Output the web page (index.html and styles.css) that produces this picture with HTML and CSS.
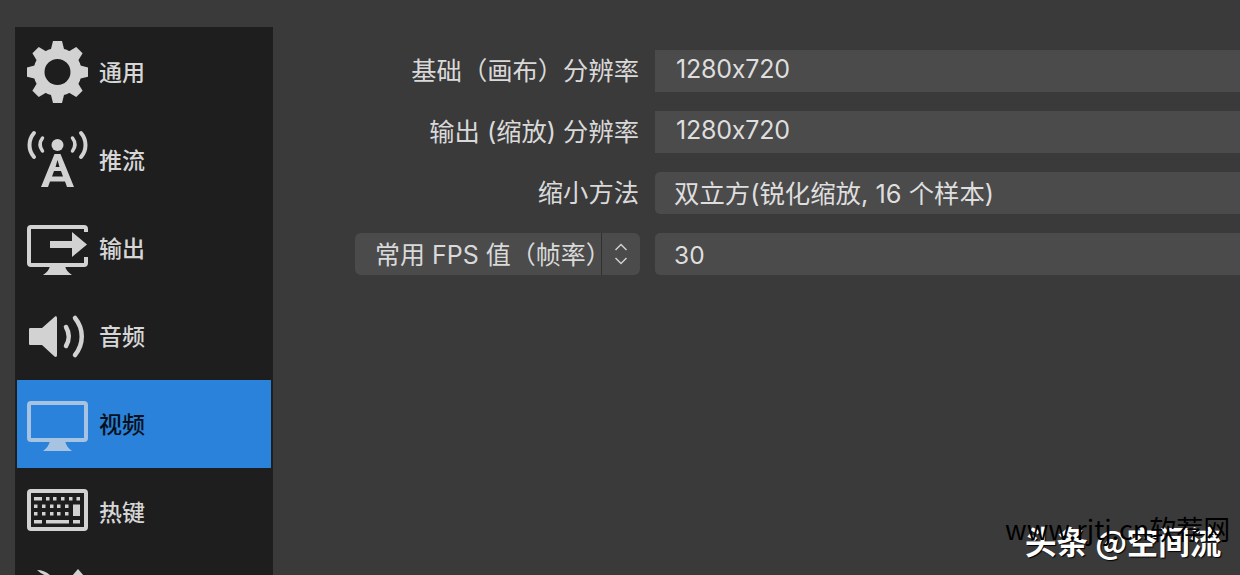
FILE: index.html
```html
<!DOCTYPE html>
<html lang="zh">
<head>
<meta charset="utf-8">
<title>视频设置</title>
<link rel="stylesheet" href="styles.css">
</head>
<body>
<div class="app">
  <nav class="sidebar">
    <div class="item">
      <svg class="icon" viewBox="0 0 61 62"><g class="fill"><circle class="gear-ring" cx="30.5" cy="31" r="18.5"/>
        <path d="M26-0 35-0 37.5 10 23.5 10Z"/>
        <path transform="rotate(45 30.5 31)" d="M26-0 35-0 37.5 10 23.5 10Z"/>
        <path transform="rotate(90 30.5 31)" d="M26-0 35-0 37.5 10 23.5 10Z"/>
        <path transform="rotate(135 30.5 31)" d="M26-0 35-0 37.5 10 23.5 10Z"/>
        <path transform="rotate(180 30.5 31)" d="M26-0 35-0 37.5 10 23.5 10Z"/>
        <path transform="rotate(225 30.5 31)" d="M26-0 35-0 37.5 10 23.5 10Z"/>
        <path transform="rotate(270 30.5 31)" d="M26-0 35-0 37.5 10 23.5 10Z"/>
        <path transform="rotate(315 30.5 31)" d="M26-0 35-0 37.5 10 23.5 10Z"/></g></svg>
      <span>通用</span>
    </div>
    <div class="item">
      <svg class="icon" viewBox="0 0 61 62"><g class="fill"><circle cx="30.5" cy="16" r="6"/><path fill-rule="evenodd" d="M27.5 25h6L47 58h-7l-2-5.500H23L21 58h-7ZM30.500 31 28.500 38h4ZM27 42l-2 5.500h11L34 42Z"/></g>
        <path class="line" d="M7 4C1 11 1 21 7 28M54 4c6 7 6 17 0 24"/><path class="line thin" d="M15.500 9c-3 4-3 9 0 13M45.500 9c3 4 3 9 0 13"/></svg>
      <span>推流</span>
    </div>
    <div class="item">
      <svg class="icon" viewBox="0 0 61 62"><path class="line-f" d="M59 15V12a2 2 0 0 0-2-2H4a2 2 0 0 0-2 2v34a2 2 0 0 0 2 2h53a2 2 0 0 0 2-2v-6"/><path class="fill" d="M23 49h15c1 4 3 6 7 9H16c4-3 6-5 7-9ZM23 24h22v-9l15 12.500L45 40v-9H23Z"/></svg>
      <span>输出</span>
    </div>
    <div class="item">
      <svg class="icon" viewBox="0 0 61 62"><path class="fill" d="M2 24.500c0-1 .5-1.500 1.500-1.500H15L28 11.500c1-.5 2 0 2 1.500v37c0 2-1 2.500-2.500 1.500L15 40H3.500C2.500 40 2 39.500 2 38.500Z"/><path class="line thick" d="M39 22c3.500 6 3.500 13 0 19"/><path class="line thick" d="M48 13c9 11 9 26 0 37"/></svg>
      <span>音频</span>
    </div>
    <div class="item active">
      <svg class="icon" viewBox="0 0 61 62"><path class="line-f blue" d="M4 10h53a2 2 0 0 1 2 2v33a2 2 0 0 1-2 2H4a2 2 0 0 1-2-2V12a2 2 0 0 1 2-2Z"/><path class="fill blue-f" d="M23 48h15c1 4 3 7 7 10H16c4-3 6-6 7-10Z"/></svg>
      <span>视频</span>
    </div>
    <div class="item">
      <svg class="icon" viewBox="0 0 61 62"><rect class="line-f" x="2" y="10" width="57" height="38" rx="2"/>
        <path class="fill" d="M7 16h8v3.500H7ZM19 16h3.500v3.500H19ZM26 16h3.500v3.500H26ZM34 16h3.500v3.500H34ZM42 16h3.500v3.500H42ZM49.500 16h3.500v3.500h-3.500ZM7 23.500h3.500V27H7ZM15 23.500h3.500V27H15ZM23 23.500h3.500V27H23ZM30 23.500h3.500V27H30ZM38 23.500h3.500V27H38ZM7 31h3.500v3.500H7ZM15 31h3.500v3.500H15ZM23 31h3.500v3.500H23ZM30 31h3.500v3.500H30ZM38 31h3.500v3.500H38ZM46 23.500h7V35h-7ZM7 39h8v3.500H7ZM19 39h23v3.500H19ZM46 39h7v3.500h-7Z"/></svg>
      <span>热键</span>
    </div>
    <div class="item">
      <svg class="icon" viewBox="0 0 61 62"><path class="fill" d="M10 1c5 0 10 2 14 6h-5c-3-2-6-3-9-6ZM51 0l6 7H45Z"/></svg>
    </div>
  </nav>
  <main class="form">
    <div class="row">
      <label class="label">基础（画布）分辨率</label>
      <div class="field square"><span class="num">1280x720</span></div>
    </div>
    <div class="row">
      <label class="label">输出 (缩放) 分辨率</label>
      <div class="field square"><span class="num">1280x720</span></div>
    </div>
    <div class="row">
      <label class="label">缩小方法</label>
      <div class="field">双立方(锐化缩放, 16 个样本)</div>
    </div>
    <div class="row">
      <div class="combo">
        <span class="combo-text">常用 FPS 值（帧率）</span>
        <span class="combo-arrows">
          <svg class="chev" viewBox="0 0 14 24"><path d="M1.500 8 7 2.500 12.500 8M1.500 16 7 21.500 12.500 16"/></svg>
        </span>
      </div>
      <div class="field"><span class="digits">30</span></div>
    </div>
  </main>
</div>
<div class="wm wm-white">头条 @空间流</div>
<div class="wm wm-black">www.rjtj.cn软荐网</div>
</body>
</html>
```
FILE: styles.css
```css
* { box-sizing: border-box; }
html, body { margin: 0; height: 100%; overflow: hidden; }
body {
  background: #3a3a3a;
  font-family: Inter, "Noto Sans CJK SC", sans-serif;
  font-feature-settings: "calt" 0;
  color: #d9d9d9;
  position: relative;
}
.app { display: flex; height: 575px; padding: 27px 0 0 15px; }
.sidebar {
  width: 258px;
  flex: none;
  background: #1e1e1e;
  padding: 1px 2px 0;
  overflow: hidden;
}
.item {
  height: 88px;
  display: flex;
  align-items: center;
  gap: 11px;
  padding-left: 10px;
  font-size: 23px;
  font-weight: 500;
  color: #d6d6d6;
}
.item span { position: relative; top: -1px; }
.item.active { background: #2a82da; color: #06101a; }
.icon { width: 61px; height: 62px; flex: none; display: block; }
.fill { fill: #d2d2d2; }
.gear-ring { fill: none; stroke: #d2d2d2; stroke-width: 11px; }
.line { fill: none; stroke: #d2d2d2; stroke-width: 4px; stroke-linecap: round; }
.line.thin { stroke-width: 3.500px; }
.line.thick { stroke-width: 4.500px; }
.line-f { fill: none; stroke: #d2d2d2; stroke-width: 4px; }
.line-f.blue { stroke: #a6c3e2; }
.fill.blue-f { fill: #a6c3e2; }
.form {
  flex: 1;
  padding-top: 23px;
  display: flex;
  flex-direction: column;
  gap: 19px;
  min-width: 0;
}
.row {
  display: grid;
  grid-template-columns: 366px 1fr;
  column-gap: 16px;
  height: 42px;
  align-items: center;
}
.label { text-align: right; font-size: 25.300px; line-height: 42px; color: #d9d9d9; white-space: nowrap; }
.field {
  height: 42px;
  background: #4b4b4b;
  border-radius: 5px 0 0 5px;
  padding-left: 19px;
  font-size: 25.400px;
  line-height: 44px;
  color: #dedede;
  white-space: nowrap;
}
.field.square { border-radius: 0; }
.num { font-size: 25px; letter-spacing: -0.2px; margin-left: 2px; position: relative; top: -3px; }
.digits { font-size: 24.500px; }
.combo {
  margin-left: 82px;
  width: 285px;
  height: 42px;
  background: #4b4b4b;
  border-radius: 6px;
  display: flex;
  align-items: center;
  font-size: 25px;
  color: #d9d9d9;
}
.combo-text { width: 246px; padding-left: 20px; white-space: nowrap; flex: none; position: relative; top: -1px; }
.combo-arrows {
  flex: 1;
  height: 42px;
  border-left: 1px solid #303030;
  display: flex;
  align-items: center;
  justify-content: center;
}
.chev { width: 14px; height: 24px; }
.chev path { fill: none; stroke: #cfcfcf; stroke-width: 1.500px; }
.wm { position: absolute; white-space: nowrap; font-family: "Noto Sans CJK SC", sans-serif; }
.wm-white {
  left: 1025px; top: 519px;
  font-size: 31.500px; line-height: 42px; font-weight: 700;
  color: #fff;
  text-shadow: 1px 1px 1px #000;
}
.wm-black {
  left: 1005px; top: 510px;
  font-size: 27px; line-height: 38px;
  color: #000;
}
```
